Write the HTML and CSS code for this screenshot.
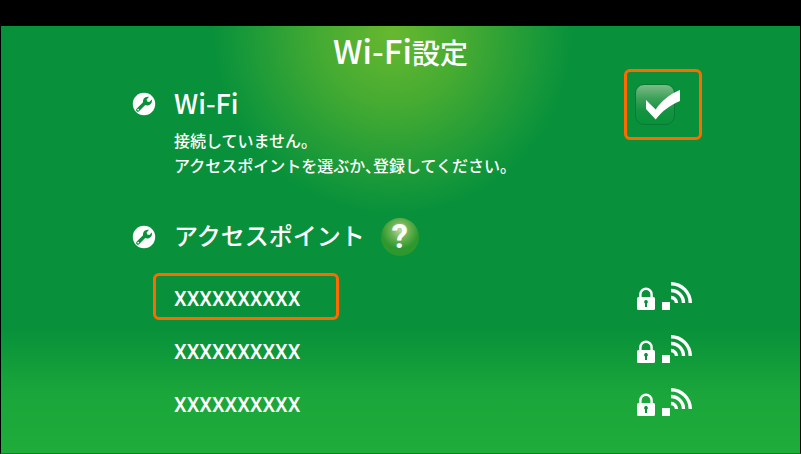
FILE: index.html
```html
<!DOCTYPE html>
<html lang="ja">
<head>
  <meta charset="UTF-8">
  <title>Wi-Fi設定</title>
  <link rel="stylesheet" href="styles.css">
</head>
<body>
  <!-- shared icons -->
  <svg class="sprite" aria-hidden="true">
    <symbol id="wrench" viewBox="0 0 24 24">
      <circle cx="12" cy="12" r="11.2" fill="#fff"/>
      <path d="M5.8 18 L13 10.8" stroke="#08913a" stroke-width="3.4" stroke-linecap="round"/>
      <path d="M11.2 11.2 C10.2 7.2 13 4.2 17 4.8 L14.6 7.4 L15.2 9.6 L17.4 10.1 L19.8 7.4 C20.7 11.2 17.6 14.2 13.6 13.3 Z" fill="#08913a"/>
      <circle cx="6.2" cy="17.6" r="0.9" fill="#fff"/>
    </symbol>
    <symbol id="lock" viewBox="0 0 18 24">
      <path d="M3.4 11 V7.4 a5.6 5.6 0 0 1 11.2 0 V11" fill="none" stroke="#fff" stroke-width="2.4"/>
      <rect x="0" y="10" width="18" height="13" rx="1.6" fill="#fff"/>
      <path d="M9 13 a1.9 1.9 0 0 1 1 3.5 V20 H8 V16.5 A1.9 1.9 0 0 1 9 13 Z" fill="#08913a"/>
    </symbol>
    <symbol id="signal" viewBox="0 0 30 28">
      <rect x="0" y="20" width="8" height="8" fill="#fff"/>
      <g fill="none" stroke="#fff" stroke-width="3.4">
        <path d="M9 15.5 A5.5 5.5 0 0 1 14.5 21"/>
        <path d="M9 8.5 A12.5 12.5 0 0 1 21.5 21"/>
        <path d="M9 1.7 A19.3 19.3 0 0 1 28.3 21"/>
      </g>
    </symbol>
  </svg>

  <main class="screen">
    <h1 class="title"><span class="latin">Wi-Fi</span>設定</h1>

    <section class="setting">
      <svg class="wrench"><use href="#wrench"/></svg>
      <div class="setting-text">
        <h2 class="heading" id="wifiLabel">Wi-Fi</h2>
        <p class="status">接続していません。<br>アクセスポイントを選ぶか、登録してください。</p>
      </div>
      <label class="toggle">
        <input type="checkbox" class="check" aria-labelledby="wifiLabel" checked>
        <svg class="tick" viewBox="0 0 34 30">
          <path d="M0 10 L9.7 19.5 C15 11.5 23 4.5 34 0 V11 C25 14.5 16 21 9.7 29.5 L0 19 Z" fill="#fff"/>
        </svg>
      </label>
    </section>

    <section class="points">
      <div class="points-head">
        <svg class="wrench"><use href="#wrench"/></svg>
        <h2 class="heading">アクセスポイント</h2>
        <button type="button" class="help">?</button>
      </div>

      <ul class="list">
        <li class="row">
          <button type="button" class="point selected">XXXXXXXXXX</button>
          <svg class="lock"><use href="#lock"/></svg>
          <svg class="signal"><use href="#signal"/></svg>
        </li>
        <li class="row">
          <button type="button" class="point">XXXXXXXXXX</button>
          <svg class="lock"><use href="#lock"/></svg>
          <svg class="signal"><use href="#signal"/></svg>
        </li>
        <li class="row">
          <button type="button" class="point">XXXXXXXXXX</button>
          <svg class="lock"><use href="#lock"/></svg>
          <svg class="signal"><use href="#signal"/></svg>
        </li>
      </ul>
    </section>
  </main>
</body>
</html>
```

FILE: styles.css
```css
* {
  box-sizing: border-box;
  margin: 0;
  padding: 0;
}

body {
  background: #000;
  color: #fff;
  font-family: "Noto Sans CJK JP", sans-serif;
  font-weight: 500;
}

.sprite {
  display: none;
}

.screen {
  min-height: 100vh;
  padding: 7px 98px 0 131px;
  border: 1px solid #000;
  border-top-width: 26px;
  border-bottom-color: #555;
  background:
    radial-gradient(circle 180px at 49% 8px, #67b82f 0%, #45ab32 40%, #2ba036 65%, #15973a 86%, rgba(8, 145, 58, 0) 100%),
    linear-gradient(#08913a 71%, #1aa63a 86%, #1fac3a 100%);
}

.title {
  margin-left: -33px;
  font-size: 28px;
  font-weight: 500;
  line-height: 34px;
  text-align: center;
}

.latin {
  font-size: 33px;
}

/* Wi-Fi on / off */
.setting {
  display: flex;
  align-items: flex-start;
}

.wrench {
  flex: none;
  width: 24px;
  height: 24px;
  margin-right: 18px;
}

.setting .wrench {
  margin-top: 23px;
}

.setting-text {
  flex: 1;
  padding-top: 16px;
}

.heading {
  font-size: 24px;
  font-weight: 500;
  line-height: 36px;
}

.setting .heading {
  font-size: 27px;
}

.status {
  margin-top: 7px;
  font-size: 16px;
  line-height: 25px;
  font-feature-settings: "halt";
}

.toggle {
  position: relative;
  display: flex;
  align-items: center;
  width: 78px;
  height: 71px;
  padding-left: 8px;
  border: 3px solid #ff6a00;
  border-radius: 6px;
  cursor: pointer;
}

.check {
  appearance: none;
  width: 40px;
  height: 41px;
  border: 1px solid #087a35;
  border-radius: 9px;
  background: linear-gradient(#7dbb88, #3ba159 35%, #149342 65%, #08913a);
}

.tick {
  position: absolute;
  left: 19px;
  top: 18px;
  width: 34px;
  height: 30px;
  display: none;
}

.check:checked + .tick {
  display: block;
}

/* Access points */
.points {
  margin-top: 39px;
}

.points-head {
  display: flex;
  align-items: center;
}

.points-head .heading {
  padding-bottom: 3px;
}

.help {
  width: 38px;
  height: 38px;
  margin-left: 16px;
  border: none;
  border-radius: 50%;
  background: radial-gradient(circle at 50% 32%, #b9dca0 0, #6db354 28%, #2d982d 58%);
  color: #fff;
  font-family: Roboto, sans-serif;
  font-size: 33px;
  font-weight: bold;
  line-height: 38px;
}

.list {
  display: grid;
  gap: 6px;
  margin: 17px 0 0 21px;
  list-style: none;
}

.row {
  display: flex;
  align-items: center;
  padding-right: 10px;
}

.point {
  width: 186px;
  height: 47px;
  margin-right: auto;
  padding: 4px 0 0 18px;
  border: 3px solid transparent;
  border-radius: 6px;
  background: none;
  color: #fff;
  font-family: Roboto, sans-serif;
  font-size: 20px;
  font-weight: 500;
  text-align: left;
}

.selected {
  border-color: #ff6a00;
}

.lock {
  width: 18px;
  height: 24px;
  margin: 4px 7px 0 0;
}

.signal {
  width: 30px;
  height: 28px;
  margin-bottom: 2px;
}
```
